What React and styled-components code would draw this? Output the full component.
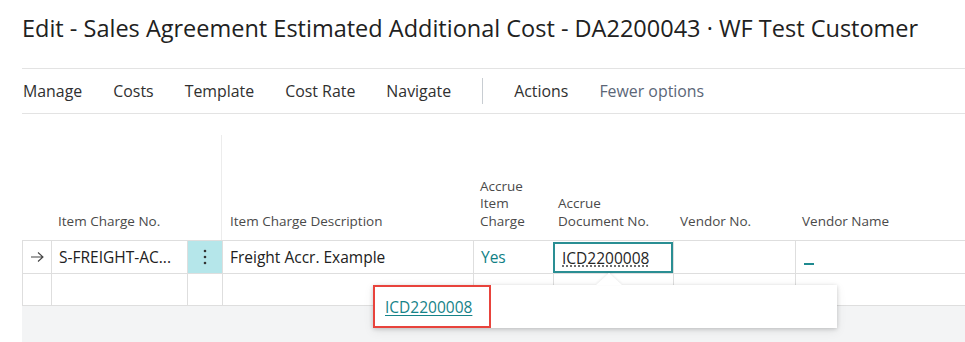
import React from 'react';
import styled, { createGlobalStyle } from 'styled-components';

const GlobalStyle = createGlobalStyle`
  body {
    margin: 0;
    background: #ffffff;
    font-family: "Open Sans", "Noto Sans", sans-serif;
    color: #212121;
    overflow: hidden;
  }
`;

const Page = styled.div`
  width: 965px;
  height: 342px;
  padding-left: 22px;
  box-sizing: border-box;
  overflow: hidden;
`;

const Title = styled.h1`
  margin: 0;
  height: 68px;
  padding-top: 13px;
  box-sizing: border-box;
  font-size: 23.5px;
  font-weight: 400;
  line-height: 30px;
  color: #212121;
  white-space: nowrap;
`;

const Toolbar = styled.div`
  display: flex;
  align-items: center;
  gap: 31px;
  height: 46px;
  border-top: 1px solid #e3e3e3;
  border-bottom: 1px solid #e3e3e3;
  box-sizing: border-box;
  padding-left: 1px;
`;

const ToolItem = styled.span`
  font-size: 15.9px;
  color: ${(p) => (p.$muted ? '#5b6677' : '#303030')};
  white-space: nowrap;
`;

const Separator = styled.span`
  width: 1px;
  height: 26px;
  background: #c8cdd2;
`;

const TableArea = styled.div`
  position: relative;
  margin-top: 21px;
`;

const Grid = styled.div`
  display: grid;
  grid-template-columns: 29px 136px 35px 251px 80px 120px 122px 1fr;
`;

const HeadCell = styled.div`
  height: 105px;
  display: flex;
  align-items: flex-end;
  padding: 0 0 10px ${(p) => p.$pad || 7}px;
  box-sizing: border-box;
  font-size: 13.5px;
  line-height: 17.5px;
  color: #4a4a4a;
  border-right: ${(p) => (p.$divider ? '1px solid #ececec' : 'none')};
`;

const Cell = styled.div`
  height: 33px;
  display: flex;
  align-items: center;
  padding-left: 7px;
  box-sizing: border-box;
  border-top: 1px solid #dedede;
  border-left: 1px solid #dedede;
  border-bottom: ${(p) => (p.$last ? '1px solid #dedede' : 'none')};
  font-size: 15.5px;
  color: ${(p) => (p.$teal ? '#0f7f85' : '#212121')};
  background: ${(p) => (p.$active ? '#b5e6ea' : 'transparent')};
  justify-content: ${(p) => (p.$center ? 'center' : 'flex-start')};
  white-space: nowrap;
  overflow: hidden;
`;

const InputCell = styled.div`
  height: 33px;
  padding: 1px 0 0 0;
  box-sizing: border-box;
  border-top: 1px solid #dedede;
`;

const InputBox = styled.div`
  height: 31px;
  display: flex;
  align-items: center;
  padding-left: 7px;
  box-sizing: border-box;
  border: 2px solid #2a8e93;
  font-size: 15.5px;
  color: #262626;
  text-decoration: underline dotted #444;
  text-underline-offset: 2px;
`;

const Dash = styled.span`
  display: inline-block;
  width: 10px;
  height: 2px;
  background: #1f8a90;
  margin-top: 14px;
  margin-left: 1px;
`;

const Footer = styled.div`
  height: 40px;
  background: #f3f4f5;
`;

const Popup = styled.div`
  position: absolute;
  left: 351px;
  top: 150px;
  width: 464px;
  height: 43px;
  background: #ffffff;
  box-shadow: 0 1px 4px rgba(0, 0, 0, 0.18), 0 3px 10px rgba(0, 0, 0, 0.08);
  display: flex;
  align-items: center;
`;

const Caret = styled.div`
  position: absolute;
  left: 223px;
  top: -12px;
  width: 0;
  height: 0;
  border-left: 13px solid transparent;
  border-right: 13px solid transparent;
  border-bottom: 12px solid #ffffff;
  filter: drop-shadow(0 -1px 1px rgba(0, 0, 0, 0.08));
`;

const Highlight = styled.div`
  height: 43px;
  width: 118px;
  box-sizing: border-box;
  border: 2.5px solid #e8433c;
  display: flex;
  align-items: center;
  padding-left: 10px;
`;

const LookupLink = styled.span`
  font-size: 15.5px;
  color: #168389;
  text-decoration: underline;
  text-underline-offset: 2px;
`;

const Arrow = () => (
  <svg width="15" height="12" viewBox="0 0 15 12">
    <path d="M1 6h12M8 1.5L13 6l-5 4.5" stroke="#444" strokeWidth="1.1" fill="none" />
  </svg>
);

const Dots = () => (
  <svg width="4" height="16" viewBox="0 0 4 16">
    <circle cx="2" cy="2" r="1.3" fill="#333" />
    <circle cx="2" cy="8" r="1.3" fill="#333" />
    <circle cx="2" cy="14" r="1.3" fill="#333" />
  </svg>
);

const actions = ['Manage', 'Costs', 'Template', 'Cost Rate', 'Navigate'];

const App = () => (
  <Page>
    <GlobalStyle />
    <Title>Edit - Sales Agreement Estimated Additional Cost - DA2200043 · WF Test Customer</Title>
    <Toolbar>
      {actions.map((a) => (
        <ToolItem key={a}>{a}</ToolItem>
      ))}
      <Separator />
      <ToolItem>Actions</ToolItem>
      <ToolItem $muted>Fewer options</ToolItem>
    </Toolbar>
    <TableArea>
      <Grid>
        <HeadCell />
        <HeadCell>Item Charge No.</HeadCell>
        <HeadCell $divider />
        <HeadCell $pad={8}>Item Charge Description</HeadCell>
        <HeadCell>
          Accrue
          <br />
          Item
          <br />
          Charge
        </HeadCell>
        <HeadCell $pad={5}>
          Accrue
          <br />
          Document No.
        </HeadCell>
        <HeadCell>Vendor No.</HeadCell>
        <HeadCell>Vendor Name</HeadCell>

        <Cell>
          <Arrow />
        </Cell>
        <Cell>S-FREIGHT-AC...</Cell>
        <Cell $active $center style={{ paddingLeft: 0 }}>
          <Dots />
        </Cell>
        <Cell>Freight Accr. Example</Cell>
        <Cell $teal>Yes</Cell>
        <InputCell>
          <InputBox>ICD2200008</InputBox>
        </InputCell>
        <Cell />
        <Cell>
          <Dash />
        </Cell>

        <Cell $last />
        <Cell $last />
        <Cell $last />
        <Cell $last />
        <Cell $last />
        <Cell $last />
        <Cell $last />
        <Cell $last />
      </Grid>
      <Footer />
      <Popup>
        <Caret />
        <Highlight>
          <LookupLink>ICD2200008</LookupLink>
        </Highlight>
      </Popup>
    </TableArea>
  </Page>
);

export default App;
